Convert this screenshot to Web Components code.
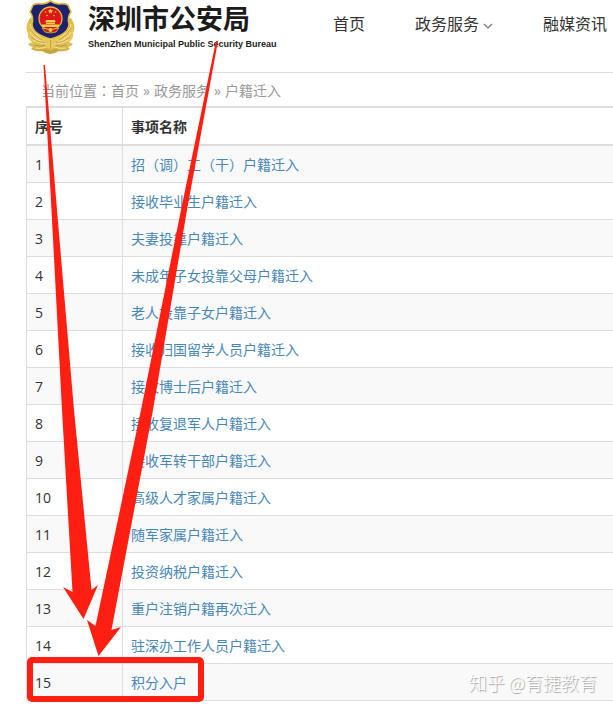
<!DOCTYPE html>
<html lang="zh-CN">
<head>
<meta charset="utf-8">
<meta name="viewport" content="width=device-width, initial-scale=1">
<title>深圳市公安局 - 户籍迁入</title>
<style>
    body {
        margin: 0;
        background: #fff;
        color: #333;
        font-family: "Open Sans", "Noto Sans CJK SC", sans-serif;
        font-size: 14px;
        line-height: 20px;
    }
</style>
</head>
<body>
<service-page>
    <site-header slot="header">
        <site-logo slot="logo"></site-logo>
        <nav-item href="#home">首页</nav-item>
        <nav-item href="#service" menu>政务服务</nav-item>
        <nav-item href="#media">融媒资讯</nav-item>
    </site-header>
    <bread-crumb></bread-crumb>
    <service-table></service-table>
    <mark-arrows slot="marks"></mark-arrows>
    <photo-credit slot="marks">知乎 @育捷教育</photo-credit>
</service-page>

<script>
// Contenedor de la página
class ServicePage extends HTMLElement {
    constructor() {
        super();
        this.attachShadow({ mode: 'open' });
    }

    connectedCallback() {
        this.shadowRoot.innerHTML = `
            <style>
                :host {
                    display: block;
                    position: relative;
                    overflow: hidden;
                    padding: 0 0 8px 26px;
                }
            </style>
            <slot name="header"></slot>
            <main><slot></slot></main>
            <slot name="marks"></slot>
        `;
    }
}
customElements.define('service-page', ServicePage);

// Cabecera con el logo y la navegación
class SiteHeader extends HTMLElement {
    constructor() {
        super();
        this.attachShadow({ mode: 'open' });
    }

    connectedCallback() {
        this.shadowRoot.innerHTML = `
            <style>
                :host {
                    display: block;
                    border-bottom: 1px solid #ddd;
                }
                header {
                    display: flex;
                    align-items: flex-start;
                    height: 72px;
                }
                .logo {
                    flex: 0 0 307px;
                }
                nav {
                    display: flex;
                    gap: 50px;
                    padding-top: 12px;
                }
            </style>
            <header>
                <div class="logo"><slot name="logo"></slot></div>
                <nav><slot></slot></nav>
            </header>
        `;
    }
}
customElements.define('site-header', SiteHeader);

// Enlace de la navegación, con flecha si tiene el atributo menu
class NavItem extends HTMLElement {
    constructor() {
        super();
        this.attachShadow({ mode: 'open' });
    }

    connectedCallback() {
        const arrow = this.hasAttribute('menu')
            ? `<svg width="10" height="6" viewBox="0 0 10 6" aria-hidden="true"><path d="M1 1 5 5 9 1" fill="none" stroke="#888" stroke-width="1.5"/></svg>`
            : '';
        this.shadowRoot.innerHTML = `
            <style>
                :host {
                    display: block;
                    flex: none;
                }
                a {
                    display: flex;
                    align-items: center;
                    gap: 4px;
                    color: #333;
                    font-size: 16px;
                    line-height: 24px;
                    text-decoration: none;
                    white-space: nowrap;
                }
                svg {
                    margin-top: 4px;
                }
            </style>
            <a href="${this.getAttribute('href')}"><slot></slot>${arrow}</a>
        `;
    }
}
customElements.define('nav-item', NavItem);

// Emblema de la policía y nombre de la oficina
class SiteLogo extends HTMLElement {
    constructor() {
        super();
        this.attachShadow({ mode: 'open' });
    }

    connectedCallback() {
        this.shadowRoot.innerHTML = `
            <style>
                :host {
                    display: block;
                }
                a {
                    display: flex;
                    gap: 13px;
                    color: #1c1c1c;
                    text-decoration: none;
                    white-space: nowrap;
                }
                svg {
                    flex: none;
                }
                .name {
                    display: block;
                    padding-top: 3px;
                    font-size: 27px;
                    font-weight: 700;
                    line-height: 32px;
                }
                .en {
                    display: block;
                    padding-top: 3px;
                    font-family: "Liberation Sans", Arial, sans-serif;
                    font-size: 9px;
                    font-weight: 700;
                    line-height: 12px;
                }
            </style>
            <a href="#home">
                <svg width="49" height="55" viewBox="0 0 49 55" aria-hidden="true">
                    <defs>
                        <linearGradient id="gold" x1="0" y1="0" x2="0" y2="1">
                            <stop offset="0" stop-color="#dcb93a"/>
                            <stop offset=".6" stop-color="#e8cb60"/>
                            <stop offset="1" stop-color="#c9a238"/>
                        </linearGradient>
                    </defs>
                    <!-- ramas -->
                    <path d="M5 17C1 22-1 28 2 33c-1 4 1 7 4 9l-4 2q2 3 5 3l-2 2q5 3 11 2 4 3 8.500 3t8.500-3q6 1 11-2l-2-2q3 0 5-3l-4-2c3-2 5-5 4-9 3-5 1-11-3-16L38 34 24.500 40 11 34z" fill="url(#gold)"/>
                    <path d="M4 24q1 8 11 14M4 32q4 7 13 10M7 40q6 4 14 4M45 24q-1 8-11 14M45 32q-4 7-13 10M42 40q-6 4-14 4M9 48q9 1 13-2M40 48q-9 1-13-2" fill="none" stroke="#f6e7a0"/>
                    <path d="M4 28q3 7 12 12M5 37q5 5 14 6M45 28q-3 7-12 12M44 37q-5 5-14 6M8 45q7 2 14 0M41 45q-7 2-14 0" fill="none" stroke="#b8943a" stroke-width=".7"/>
                    <!-- escudo -->
                    <path d="M24.500 1Q29 4 33 4q5-1 9 1l3 7q-4 5-2 12 0 10-18.500 15Q6 34 6 24 8 17 4 12l3-7q4-2 9-1 4 0 8.500-3z" fill="#1e2070" stroke="#dfbb3e" stroke-width="1.600"/>
                    <circle cx="24.500" cy="18.500" r="11.500" fill="#dd1717" stroke="#e2bd44" stroke-width="1.300"/>
                    <path d="m24.500 8.500.8 1.700 1.900.2-1.400 1.300.4 1.900-1.700-1-1.700 1 .4-1.900-1.400-1.300 1.900-.2z" fill="#ffd44a"/>
                    <g fill="#ffd24a">
                        <circle cx="19.500" cy="12" r=".8"/><circle cx="29.500" cy="12" r=".8"/>
                        <circle cx="21" cy="15.500" r=".8"/><circle cx="28" cy="15.500" r=".8"/>
                        <path d="M20.500 20h8l1.500 2H19zM20 22.500h9V24h-9zM16 24.500h17V27H16z"/>
                    </g>
                    <path d="M16 28q8.500 3 17 0l-3 4q-5.500 2-11 0z" fill="#c51e18" stroke="#e2bd44" stroke-width=".8"/>
                    <circle cx="24.500" cy="30" r="2" fill="#e8c64a"/>
                    <path d="M24.500 39 19 46l5.500 4 5.500-4z" fill="#e8cb5c"/>
                    <path d="M24.500 40v9M18 50q6.500 3 13 0" fill="none" stroke="#b8943a" stroke-width=".8"/>
                </svg>
                <span>
                    <span class="name">深圳市公安局</span>
                    <span class="en">ShenZhen Municipal Public Security Bureau</span>
                </span>
            </a>
        `;
    }
}
customElements.define('site-logo', SiteLogo);

// Ruta de navegación
class BreadCrumb extends HTMLElement {
    constructor() {
        super();
        this.attachShadow({ mode: 'open' });
    }

    connectedCallback() {
        this.shadowRoot.innerHTML = `
            <style>
                :host {
                    display: block;
                    padding: 8px 15px 5px;
                    color: #999;
                    white-space: nowrap;
                }
                a {
                    color: inherit;
                    text-decoration: none;
                }
                a + a::before {
                    content: "»";
                    margin: 0 4px;
                }
                .mid {
                    font-family: "Noto Sans CJK TC", sans-serif;
                    line-height: 1;
                }
            </style>
            <nav>当前位置<span class="mid" lang="zh-TW">：</span><a href="#home">首页</a><a href="#service">政务服务</a><a href="#move">户籍迁入</a></nav>
        `;
    }
}
customElements.define('bread-crumb', BreadCrumb);

// Tabla de trámites
const items = [
    '招（调）工（干）户籍迁入',
    '接收毕业生户籍迁入',
    '夫妻投靠户籍迁入',
    '未成年子女投靠父母户籍迁入',
    '老人投靠子女户籍迁入',
    '接收归国留学人员户籍迁入',
    '接收博士后户籍迁入',
    '接收复退军人户籍迁入',
    '接收军转干部户籍迁入',
    '高级人才家属户籍迁入',
    '随军家属户籍迁入',
    '投资纳税户籍迁入',
    '重户注销户籍再次迁入',
    '驻深办工作人员户籍迁入',
    '积分入户'
];

class ServiceTable extends HTMLElement {
    constructor() {
        super();
        this.attachShadow({ mode: 'open' });
    }

    connectedCallback() {
        // Los paréntesis van centrados en su cuadro
        const rows = items.map((name, i) => `
            <tr><td>${i + 1}</td><td><a href="#item-${i + 1}">${name.replace(/[（）]/g, '<span class="mid" lang="zh-TW">$&</span>')}</a></td></tr>`).join('');
        this.shadowRoot.innerHTML = `
            <style>
                :host {
                    display: block;
                }
                table {
                    width: 100%;
                    border-spacing: 0;
                    border-top: 2px solid #ddd;
                    table-layout: fixed;
                }
                th, td {
                    padding: 9px 8px 7px;
                    border-bottom: 1px solid #ddd;
                    border-left: 1px solid #ddd;
                    text-align: left;
                    white-space: nowrap;
                }
                th {
                    border-bottom-width: 2px;
                }
                th:first-child {
                    width: 79px;
                }
                tbody tr:nth-child(odd) {
                    background: #f9f9f9;
                }
                a {
                    color: #4787b8;
                    text-decoration: none;
                }
                .mid {
                    font-family: "Noto Sans CJK TC", sans-serif;
                    line-height: 1;
                }
            </style>
            <table>
                <thead><tr><th>序号</th><th>事项名称</th></tr></thead>
                <tbody>${rows}</tbody>
            </table>
        `;
    }
}
customElements.define('service-table', ServiceTable);

// Flechas y recuadro rojos dibujados sobre la tabla
class MarkArrows extends HTMLElement {
    constructor() {
        super();
        this.attachShadow({ mode: 'open' });
    }

    connectedCallback() {
        this.shadowRoot.innerHTML = `
            <style>
                :host {
                    display: block;
                    position: absolute;
                    top: 0;
                    left: 0;
                    pointer-events: none;
                }
                svg {
                    display: block;
                }
            </style>
            <svg width="220" height="709" viewBox="0 0 220 709" aria-hidden="true">
                <g fill="#ff1e12">
                    <path d="M43.500 65h1.500L57 210 74 410 91.500 590 98 585 83.500 619 63 587 72.500 592 62 410 51.500 210z"/>
                    <path d="M216 41h2L187 210 153 410 111.500 630 121 627 98.500 656 87 620 95.500 626 141 410 181 210z"/>
                </g>
                <rect x="30" y="660" width="171" height="39" rx="2" fill="none" stroke="#ff1e12" stroke-width="6"/>
            </svg>
        `;
    }
}
customElements.define('mark-arrows', MarkArrows);

// Marca de agua en la esquina
class PhotoCredit extends HTMLElement {
    constructor() {
        super();
        this.attachShadow({ mode: 'open' });
    }

    connectedCallback() {
        this.shadowRoot.innerHTML = `
            <style>
                :host {
                    display: block;
                    position: absolute;
                    right: 16px;
                    bottom: 14px;
                    color: #fff;
                    font-family: "Noto Sans CJK SC", sans-serif;
                    font-size: 18px;
                    font-weight: 300;
                    line-height: 26px;
                    text-shadow: 1px 1px 1px #999;
                    white-space: nowrap;
                }
            </style>
            <slot></slot>
        `;
    }
}
customElements.define('photo-credit', PhotoCredit);
</script>
</body>
</html>
